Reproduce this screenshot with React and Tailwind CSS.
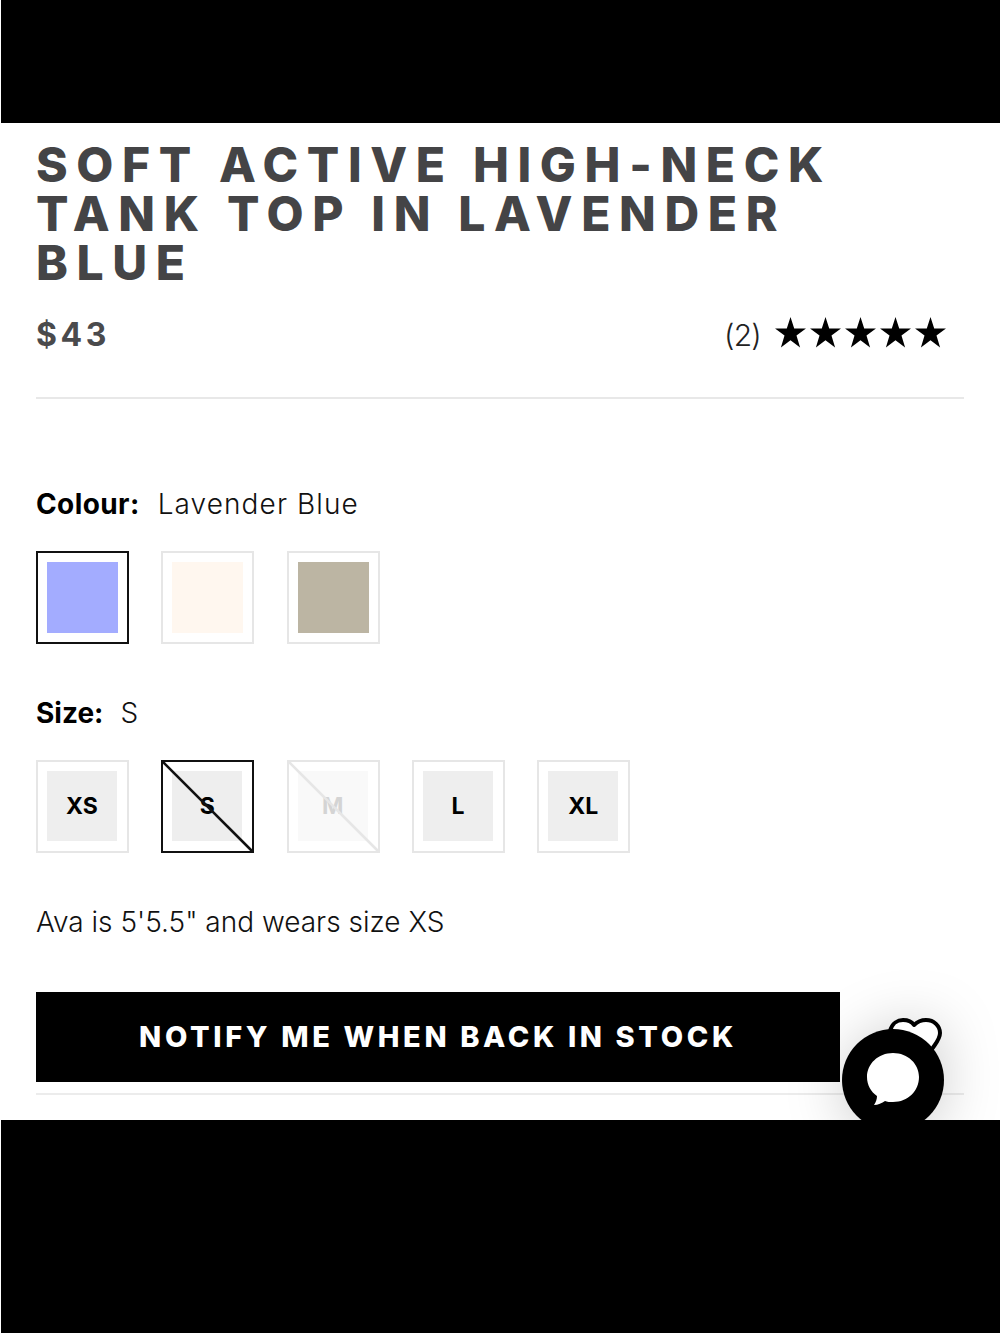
import React from 'react';

const font = { fontFamily: '"Inter", "Liberation Sans", sans-serif' };

const colours = [
  { hex: 'bg-[#a3acff]', active: true },
  { hex: 'bg-[#fff7ef]' },
  { hex: 'bg-[#bcb5a3]' },
];

const sizes = [
  { label: 'XS' },
  { label: 'S', active: true, crossed: true },
  { label: 'M', crossed: true, faded: true },
  { label: 'L' },
  { label: 'XL' },
];

const Star = () => (
  <svg viewBox="0 0 32 32" className="w-[33px] h-[33px] -mx-[1.5px]">
    <polygon points="16,1 19.6,12 31,12 21.8,18.9 25.3,30.5 16,23.4 6.7,30.5 10.2,18.9 1,12 12.4,12" fill="#000" />
  </svg>
);

const Option = ({ active, children }) => (
  <div className={`relative w-[93px] h-[93px] p-[9px] border-2 ${active ? 'border-[#111]' : 'border-[#e6e6e6]'}`}>
    {children}
  </div>
);

// diagonal over a sold out size
const Cross = ({ faded }) => (
  <svg viewBox="0 0 93 93" className="absolute -inset-[2px] w-[93px] h-[93px]">
    <line x1="1" y1="1" x2="92" y2="92" stroke={faded ? '#e6e6e6' : '#111'} strokeWidth="2.5" />
  </svg>
);

const ChatWidget = () => (
  <div className="absolute left-[832px] top-[894px] w-[122px] h-[130px]">
    <svg viewBox="0 0 122 130" className="w-[122px] h-[130px] overflow-visible drop-shadow-[0_6px_28px_rgba(0,0,0,0.2)]">
      <path d="M58 14 C60 6 66 3 71 3 C76 3 80 5 82 8 C85 5 89 3 94 3 C102 3 108 9 108 16 C108 22 104 26 100 32 L70 40 Z" fill="#fff" stroke="#000" strokeWidth="4" strokeLinejoin="round" />
      <circle cx="61" cy="63" r="51" fill="#000" />
      <path d="M61 36 C76 36 87 47 87 60 C87 74 76 85 61 85 C58 85 55 85 53 84 C50 86 46 88 42 88 C44 85 45 82 45 79 C39 75 35 68 35 60 C35 47 46 36 61 36 Z" fill="#fff" />
    </svg>
  </div>
);

export default function App() {
  return (
    <div className="w-[1000px] h-[1333px] flex flex-col bg-white overflow-hidden" style={font}>
      <div className="h-[123px] ml-px bg-black shrink-0" />

      <main className="relative flex-1 overflow-hidden px-[36px] pt-[17px]">
        <h1 className="w-[800px] text-[48px] leading-[49px] font-extrabold tracking-[0.18em] text-[#444446]">
          SOFT ACTIVE HIGH-NECK TANK TOP IN LAVENDER BLUE
        </h1>

        <div className="flex items-center justify-between mt-[28px] pr-[19px] h-[40px]">
          <span className="text-[32px] font-bold tracking-[0.11em] text-[#4a4a4c]">$43</span>
          <div className="flex items-center gap-[14px]">
            <span className="text-[30px] font-light text-[#222] tracking-tight">(2)</span>
            <div className="flex gap-[5px] mb-[5px]"><Star /><Star /><Star /><Star /><Star /></div>
          </div>
        </div>

        <div className="h-[2px] bg-[#e8e8e8] mt-[42px]" />

        <div className="flex items-center h-[36px] mt-[87px] text-[28px] text-[#111]">
          <span className="font-bold text-black tracking-[0.4px] mr-[18px]">Colour:</span>
          <span className="font-light tracking-[1.1px]">Lavender Blue</span>
        </div>

        <div className="flex gap-[32.3px] mt-[29px]">
          {colours.map((c) => (
            <Option key={c.hex} active={c.active}>
              <div className={`w-[71px] h-[71px] ${c.hex}`} />
            </Option>
          ))}
        </div>

        <div className="flex items-center h-[36px] mt-[51px] text-[28px] text-[#111]">
          <span className="font-bold text-black mr-[17px]">Size:</span>
          <span className="font-light">S</span>
        </div>

        <div className="flex gap-[32.3px] mt-[29px]">
          {sizes.map((s) => (
            <Option key={s.label} active={s.active}>
              <div className={`w-[70px] h-[70px] flex items-center justify-center text-[23px] font-bold ${s.faded ? 'bg-[#f9f9f9] text-[#d4d4d4]' : 'bg-[#eeeeee] text-black'}`}>
                {s.label}
              </div>
              {s.crossed && <Cross faded={s.faded} />}
            </Option>
          ))}
        </div>

        <p className="h-[36px] leading-[36px] mt-[51px] text-[28px] font-light text-[#111]">
          Ava is 5'5.5" and wears size XS
        </p>

        <button className="block w-[804px] h-[90px] mt-[52px] bg-black text-white text-[29px] font-extrabold tracking-[0.125em]">
          NOTIFY ME WHEN BACK IN STOCK
        </button>

        <div className="h-[2px] bg-[#ececec] mt-[11px]" />

        <ChatWidget />
      </main>

      <div className="h-[213px] ml-px bg-black shrink-0" />
    </div>
  );
}
